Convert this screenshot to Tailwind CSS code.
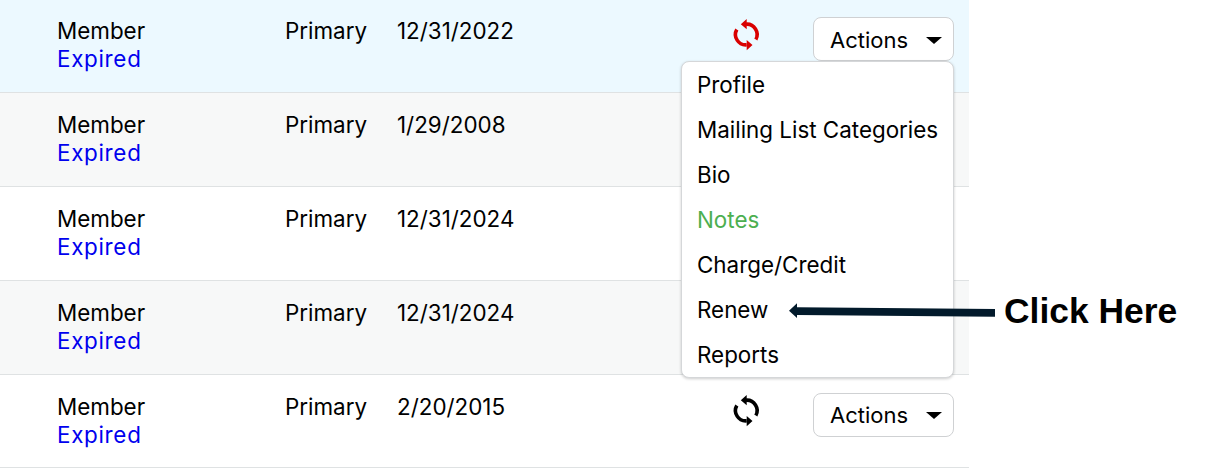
<!DOCTYPE html>
<html>
<head>
<meta charset="utf-8">
<script src="https://cdn.jsdelivr.net/npm/@tailwindcss/browser@4"></script>
</head>
<body class="bg-white overflow-hidden">
<div class="relative w-[1209px] h-[470px] overflow-hidden font-['Inter',sans-serif] text-[22.4px] leading-[28px] text-black">
  <div class="w-[969px] -mt-px">
    <div class="h-[94px] bg-[#ecf9ff] border-b border-[#dfe2e3] pl-[57px] pt-[18px] flex">
      <div class="w-[228px]"><div>Member</div><div class="text-[#0000ee] tracking-[0.7px]">Expired</div></div>
      <div class="w-[112px]">Primary</div>
      <div class="w-[334px]">12/31/2022</div>
      <div class="w-[40px] h-[36px]">
        <svg width="30" height="36" viewBox="0 0 30 36" fill="none"><path d="M15 7.2A10.3 10.3 0 0 1 24.8 22.5M15.7 27.8A10.3 10.3 0 0 1 5.8 12.5" stroke="#d90000" stroke-width="3.6"/><path d="M9.8 7.3L15.7 2V12.3ZM21.5 28L15.7 23V33.3Z" fill="#d90000"/></svg>
      </div>
      <div class="ml-[42px] w-[141px] h-[44px] rounded-[8px] border border-[#cfd1d3] bg-white flex items-center pl-[16px] pt-[2px] text-[22px]">
        <span>Actions</span>
        <span class="ml-[18px] w-0 h-0 border-x-[8px] border-x-transparent border-t-[7px] border-t-black"></span>
      </div>
    </div>
    <div class="h-[94px] bg-[#f7f8f8] border-b border-[#dfe2e3] pl-[57px] pt-[18px] flex">
      <div class="w-[228px]"><div>Member</div><div class="text-[#0000ee] tracking-[0.7px]">Expired</div></div>
      <div class="w-[112px]">Primary</div>
      <div>1/29/2008</div>
    </div>
    <div class="h-[94px] bg-white border-b border-[#dfe2e3] pl-[57px] pt-[18px] flex">
      <div class="w-[228px]"><div>Member</div><div class="text-[#0000ee] tracking-[0.7px]">Expired</div></div>
      <div class="w-[112px]">Primary</div>
      <div>12/31/2024</div>
    </div>
    <div class="h-[94px] bg-[#f7f8f8] border-b border-[#dfe2e3] pl-[57px] pt-[18px] flex">
      <div class="w-[228px]"><div>Member</div><div class="text-[#0000ee] tracking-[0.7px]">Expired</div></div>
      <div class="w-[112px]">Primary</div>
      <div>12/31/2024</div>
    </div>
    <div class="h-[93px] bg-white border-b border-[#dfe2e3] pl-[57px] pt-[18px] flex">
      <div class="w-[228px]"><div>Member</div><div class="text-[#0000ee] tracking-[0.7px]">Expired</div></div>
      <div class="w-[112px]">Primary</div>
      <div class="w-[334px]">2/20/2015</div>
      <div class="w-[40px] h-[36px]">
        <svg width="30" height="36" viewBox="0 0 30 36" fill="none"><path d="M15 7.2A10.3 10.3 0 0 1 24.8 22.5M15.7 27.8A10.3 10.3 0 0 1 5.8 12.5" stroke="#000" stroke-width="3.6"/><path d="M9.8 7.3L15.7 2V12.3ZM21.5 28L15.7 23V33.3Z" fill="#000"/></svg>
      </div>
      <div class="ml-[42px] w-[141px] h-[44px] rounded-[8px] border border-[#cfd1d3] bg-white flex items-center pl-[16px] text-[22px]">
        <span>Actions</span>
        <span class="ml-[18px] w-0 h-0 border-x-[8px] border-x-transparent border-t-[7px] border-t-black"></span>
      </div>
    </div>
  </div>

  <div class="absolute left-[681px] top-[61px] w-[273px] h-[317px] bg-white rounded-[8px] border border-[#d5d7d9] shadow-[0_1px_3px_rgba(0,0,0,0.2)] pl-[15px] flex flex-col">
    <div class="h-[45px] shrink-0 flex items-center">Profile</div>
    <div class="h-[45px] shrink-0 flex items-center">Mailing List Categories</div>
    <div class="h-[45px] shrink-0 flex items-center">Bio</div>
    <div class="h-[45px] shrink-0 flex items-center text-[#4caf50]">Notes</div>
    <div class="h-[45px] shrink-0 flex items-center">Charge/Credit</div>
    <div class="h-[45px] shrink-0 flex items-center">Renew</div>
    <div class="h-[45px] shrink-0 flex items-center">Reports</div>
  </div>

  <svg class="absolute left-[788px] top-[300px]" width="210" height="22" viewBox="0 0 210 22"><path d="M1 10.7L9 3.3V7.3L207 9V16.7L9 15V18Z" fill="#021a2b"/></svg>
  <div class="absolute left-[1004px] top-[290px] font-['Liberation_Sans',sans-serif] font-bold text-[35.4px] leading-[42px] whitespace-nowrap">Click Here</div>
</div>
</body>
</html>
